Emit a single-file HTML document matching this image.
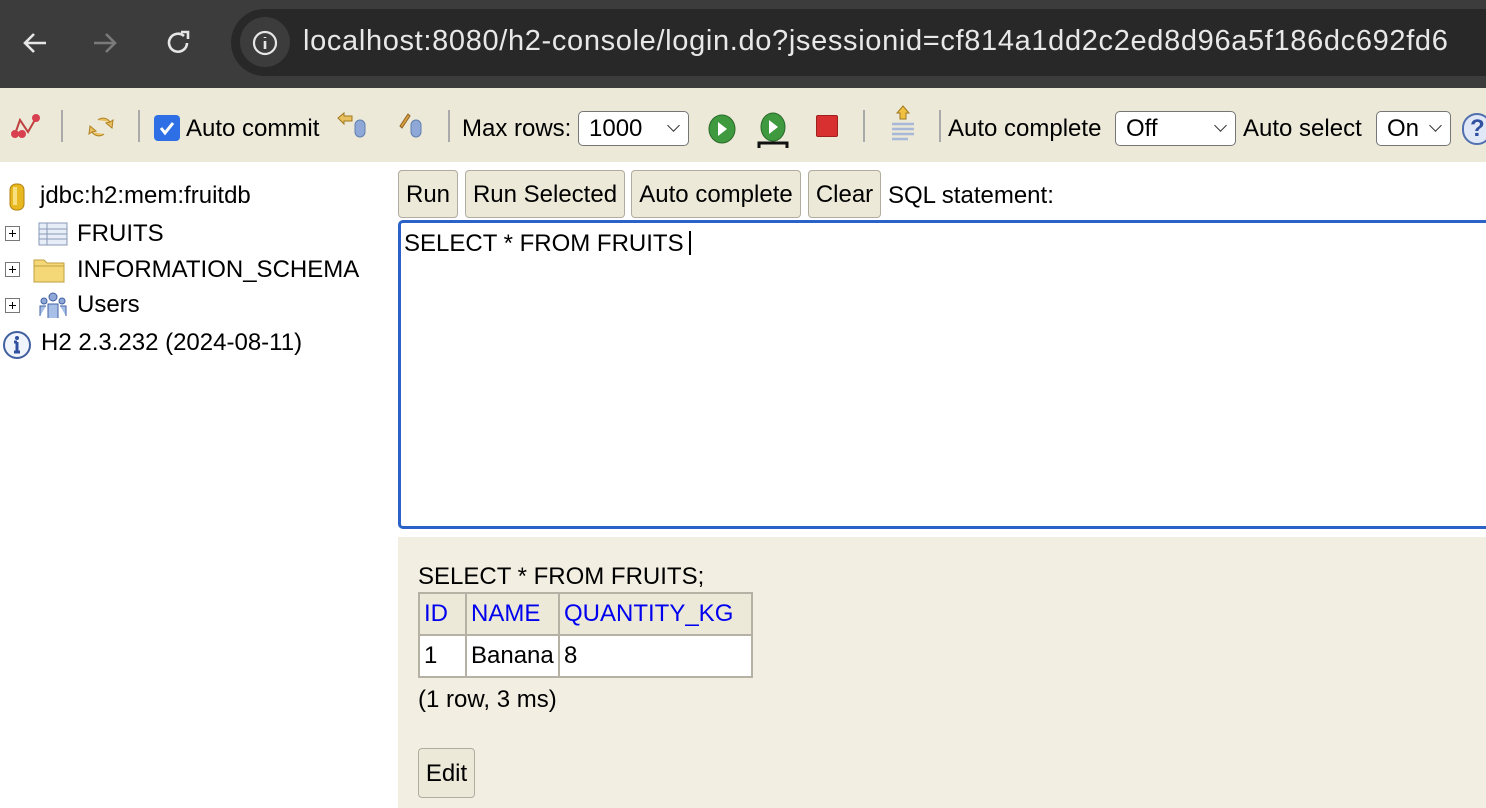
<!DOCTYPE html>
<html><head><meta charset="utf-8"><style>
*{box-sizing:border-box;margin:0;padding:0}
body{width:1486px;height:808px;overflow:hidden;background:#fff;font-family:"Liberation Sans",Arial,sans-serif;font-size:24px;color:#000;position:relative}
.abs{position:absolute;white-space:nowrap}
.chrome{position:absolute;left:0;top:0;width:1486px;height:88px;background:#3c3c3c}
.pill{position:absolute;left:231px;top:9px;width:1300px;height:67px;border-radius:34px;background:#282828}
.tb{position:absolute;left:0;top:88px;width:1486px;height:74px;background:#ece9d8}
.sep{position:absolute;top:110px;width:2px;height:32px;background:#aaa}
.sel{position:absolute;top:111px;height:35px;border:1.5px solid #767676;border-radius:5px;background:#fff;padding-left:10px;line-height:33px}
.sel:after{content:"";position:absolute;right:10px;top:9px;width:8px;height:8px;border-right:1.5px solid #333;border-bottom:1.5px solid #333;transform:rotate(45deg)}
.btn{position:absolute;top:170px;height:48px;border:1.5px solid #b0aca0;border-radius:4px;background:#ece9d8;line-height:48px;text-align:center}
.plus{position:absolute;left:5px;width:15px;height:15px;border:1px solid #777;background:#fff}
.plus:before{content:"";position:absolute;left:3px;top:6px;width:7px;height:1px;background:#000}
.plus:after{content:"";position:absolute;left:6px;top:3px;width:1px;height:7px;background:#000}
td{border:2px solid #b5b1a5;padding:0 4px;height:42px}
</style></head><body>
<div class="chrome"><div class="pill"></div>
<svg class="abs" style="left:20px;top:28px" width="30" height="30" viewBox="0 0 30 30"><path d="M26 15H6M14 6l-9 9 9 9" stroke="#e6e6e6" stroke-width="2.6" fill="none"/></svg>
<svg class="abs" style="left:90px;top:28px" width="30" height="30" viewBox="0 0 30 30"><path d="M4 15h20M16 6l9 9-9 9" stroke="#7a7a7a" stroke-width="2.6" fill="none"/></svg>
<svg class="abs" style="left:164px;top:28px" width="30" height="30" viewBox="0 0 30 30"><path d="M23 15a9 9 0 1 1-3-7" stroke="#e6e6e6" stroke-width="2.6" fill="none"/><path d="M17 4h7v7" stroke="#e6e6e6" stroke-width="2.6" fill="none"/></svg>
<div class="abs" style="left:240px;top:17px;width:50px;height:50px;border-radius:25px;background:#3c3c3c"></div>
<svg class="abs" style="left:250px;top:28px" width="30" height="30" viewBox="0 0 30 30"><circle cx="15" cy="15" r="11" stroke="#e6e6e6" stroke-width="2.2" fill="none"/><path d="M15 13v8M15 9v1" stroke="#e6e6e6" stroke-width="2.6"/></svg>
<div class="abs" style="left:303px;top:25px;font-size:29px;color:#e8e8e8;letter-spacing:.66px">localhost:8080/h2-console/login.do?jsessionid=cf814a1dd2c2ed8d96a5f186dc692fd6</div>
</div>
<div class="tb"></div>
<svg class="abs" style="left:8px;top:112px" width="34" height="28" viewBox="0 0 34 28"><path d="M7 22 L12 8 L20 20 L28 6" stroke="#c04040" stroke-width="2" fill="none"/><circle cx="7" cy="22" r="4" fill="#d84050"/><circle cx="14" cy="22" r="4" fill="#d84050"/><circle cx="28" cy="6" r="4" fill="#d84050"/></svg>
<div class="sep" style="left:61px"></div>
<svg class="abs" style="left:84px;top:110px" width="34" height="34" viewBox="0 0 34 34"><path d="M14 10a8 8 0 0 1 12 2l-4 1 6 5 1-8-3 2" fill="#e8c060" stroke="#b08020"/><path d="M20 24a8 8 0 0 1-12-2l4-1-6-5-1 8 3-2" fill="#e8c060" stroke="#b08020"/></svg>
<div class="sep" style="left:138px"></div>
<div class="abs" style="left:154px;top:115px;width:26px;height:26px;border-radius:4px;background:#2f6fe6"></div>
<svg class="abs" style="left:156px;top:117px" width="22" height="22" viewBox="0 0 22 22"><path d="M5 11l4 5 8-10" stroke="#fff" stroke-width="3" fill="none"/></svg>
<div class="abs" style="left:186px;top:115px">Auto commit</div>
<svg class="abs" style="left:334px;top:110px" width="38" height="30" viewBox="0 0 38 30"><path d="M4 8l6-5v3h8v5h-8v3z" fill="#e8c060" stroke="#a07820"/><rect x="21" y="10" width="10" height="17" rx="5" fill="#8fa8d8" stroke="#6080b0"/></svg>
<svg class="abs" style="left:396px;top:110px" width="34" height="30" viewBox="0 0 34 30"><path d="M4 16l8-12 2 2-8 12z" fill="#d8a040" stroke="#906020"/><rect x="15" y="10" width="10" height="17" rx="5" fill="#8fa8d8" stroke="#6080b0"/></svg>
<div class="sep" style="left:448px"></div>
<div class="abs" style="left:462px;top:115px">Max rows:</div>
<div class="sel" style="left:578px;width:111px">1000</div>
<svg class="abs" style="left:706px;top:112px" width="32" height="34" viewBox="0 0 32 34"><ellipse cx="16" cy="17" rx="13" ry="14" fill="#3f9a3f" stroke="#2a6a2a"/><path d="M12 10l9 7-9 7z" fill="#fff"/></svg>
<svg class="abs" style="left:754px;top:110px" width="38" height="40" viewBox="0 0 38 40"><ellipse cx="19" cy="17" rx="12" ry="14" fill="#3f9a3f" stroke="#2a6a2a"/><path d="M15 10l9 7-9 7z" fill="#fff"/><path d="M5 38v-5h28v5" stroke="#111" stroke-width="3" fill="none"/></svg>
<div class="abs" style="left:816px;top:115px;width:22px;height:22px;background:#d83030;border:1px solid #a02020;border-radius:2px"></div>
<div class="sep" style="left:863px"></div>
<svg class="abs" style="left:888px;top:104px" width="30" height="40" viewBox="0 0 30 40"><path d="M15 2l6 7h-3v6h-6V9H9z" fill="#f0c040" stroke="#a07820"/><path d="M4 20h22M4 25h22M4 30h22M4 35h16" stroke="#a8b8d8" stroke-width="2.5"/></svg>
<div class="sep" style="left:939px"></div>
<div class="abs" style="left:948px;top:115px">Auto complete</div>
<div class="sel" style="left:1115px;width:121px">Off</div>
<div class="abs" style="left:1243px;top:115px">Auto select</div>
<div class="sel" style="left:1376px;width:75px">On</div>
<div class="abs" style="left:1462px;top:113px;width:30px;height:32px;border-radius:16px;border:2px solid #5070b0;background:#e0e8f8;color:#3050a0;font-weight:bold;padding-left:6px;line-height:28px">?</div>

<svg class="abs" style="left:8px;top:182px" width="18" height="30" viewBox="0 0 18 30"><rect x="2" y="2" width="14" height="26" rx="6" fill="#e8b820" stroke="#b08010"/><rect x="5" y="5" width="4" height="18" fill="#f8e080"/></svg>
<div class="abs" style="left:40px;top:182px">jdbc:h2:mem:fruitdb</div>
<div class="plus" style="top:226px"></div>
<svg class="abs" style="left:38px;top:222px" width="30" height="24" viewBox="0 0 30 24"><rect x="1" y="1" width="28" height="22" fill="#e8eef8" stroke="#8898b8"/><path d="M1 7h28M1 12h28M1 17h28M9 1v22" stroke="#8898b8"/></svg>
<div class="abs" style="left:77px;top:220px">FRUITS</div>
<div class="plus" style="top:262px"></div>
<svg class="abs" style="left:33px;top:255px" width="32" height="28" viewBox="0 0 32 28"><path d="M1 5h10l3 3h17v19H1z" fill="#f4d878" stroke="#c0a040"/><path d="M1 11h30" stroke="#c0a040"/></svg>
<div class="abs" style="left:77px;top:256px">INFORMATION_SCHEMA</div>
<div class="plus" style="top:298px"></div>
<svg class="abs" style="left:38px;top:290px" width="30" height="30" viewBox="0 0 30 30"><circle cx="15" cy="7" r="4" fill="#8fa8d8" stroke="#4060a0"/><circle cx="6" cy="11" r="3" fill="#8fa8d8" stroke="#4060a0"/><circle cx="24" cy="11" r="3" fill="#8fa8d8" stroke="#4060a0"/><path d="M10 28V14h10v14M2 26V16h6M28 26V16h-6" fill="#a8c0e8" stroke="#4060a0"/></svg>
<div class="abs" style="left:77px;top:291px">Users</div>
<svg class="abs" style="left:2px;top:330px" width="30" height="30" viewBox="0 0 30 30"><circle cx="15" cy="15" r="13" fill="#f0f4fc" stroke="#4060a0" stroke-width="2"/><path d="M15 12v10M12 22h6M12 12h3" stroke="#3050a0" stroke-width="3"/><circle cx="15" cy="8" r="2" fill="#3050a0"/></svg>
<div class="abs" style="left:41px;top:329px">H2 2.3.232 (2024-08-11)</div>

<div class="abs" style="left:387px;top:162px;width:1099px;height:8px;background:#fff"></div>
<div class="btn" style="left:398px;width:60px">Run</div>
<div class="btn" style="left:465px;width:160px">Run Selected</div>
<div class="btn" style="left:631px;width:170px">Auto complete</div>
<div class="btn" style="left:808px;width:73px">Clear</div>
<div class="abs" style="left:888px;top:182px">SQL statement:</div>
<div class="abs" style="left:398px;top:220px;width:1100px;height:309px;border:3px solid #2a62c8;border-radius:5px;background:#fff"></div>
<div class="abs" style="left:404px;top:230px">SELECT * FROM FRUITS</div>
<div class="abs" style="left:689px;top:231px;width:2px;height:24px;background:#000"></div>

<div class="abs" style="left:398px;top:537px;width:1088px;height:271px;background:#f2efe2"></div>
<div class="abs" style="left:418px;top:563px">SELECT * FROM FRUITS;</div>
<table class="abs" style="left:418px;top:592px;border-collapse:collapse">
<tr style="background:#ece9d8;color:#0000ee"><td style="width:47px">ID</td><td style="width:93px">NAME</td><td style="width:193px">QUANTITY_KG</td></tr>
<tr style="background:#fff"><td>1</td><td>Banana</td><td>8</td></tr></table>
<div class="abs" style="left:418px;top:686px">(1 row, 3 ms)</div>
<div class="abs" style="left:418px;top:748px;width:57px;height:50px;border:1.5px solid #b0aca0;border-radius:4px;background:#ece9d8;line-height:50px;text-align:center">Edit</div>
</body></html>
